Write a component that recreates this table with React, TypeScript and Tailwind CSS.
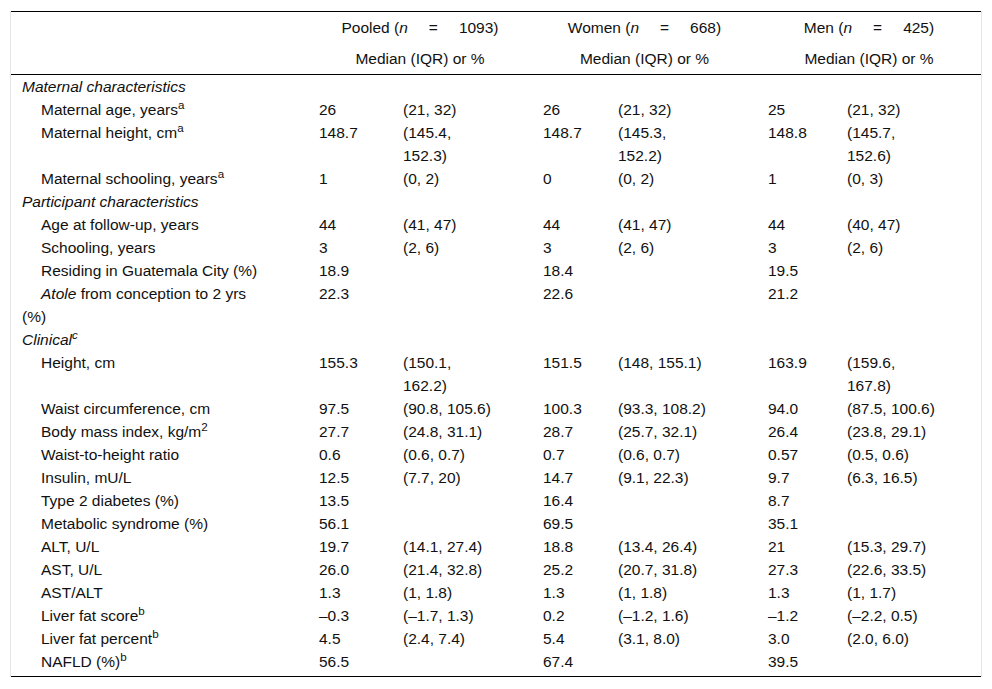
import React from "react";

type Row =
  | { kind: "cat"; label: React.ReactNode }
  | { kind: "row"; label: React.ReactNode; v: string[] };

const rows: Row[] = [
  { kind: "cat", label: "Maternal characteristics" },
  { kind: "row", label: <>Maternal age, years<sup>a</sup></>, v: ["26", "(21, 32)", "26", "(21, 32)", "25", "(21, 32)"] },
  { kind: "row", label: <>Maternal height, cm<sup>a</sup></>, v: ["148.7", "(145.4, 152.3)", "148.7", "(145.3, 152.2)", "148.8", "(145.7, 152.6)"] },
  { kind: "row", label: <>Maternal schooling, years<sup>a</sup></>, v: ["1", "(0, 2)", "0", "(0, 2)", "1", "(0, 3)"] },
  { kind: "cat", label: "Participant characteristics" },
  { kind: "row", label: "Age at follow-up, years", v: ["44", "(41, 47)", "44", "(41, 47)", "44", "(40, 47)"] },
  { kind: "row", label: "Schooling, years", v: ["3", "(2, 6)", "3", "(2, 6)", "3", "(2, 6)"] },
  { kind: "row", label: "Residing in Guatemala City (%)", v: ["18.9", "", "18.4", "", "19.5", ""] },
  { kind: "row", label: <><i>Atole</i> from conception to 2 yrs (%)</>, v: ["22.3", "", "22.6", "", "21.2", ""] },
  { kind: "cat", label: <>Clinical<sup>c</sup></> },
  { kind: "row", label: "Height, cm", v: ["155.3", "(150.1, 162.2)", "151.5", "(148, 155.1)", "163.9", "(159.6, 167.8)"] },
  { kind: "row", label: "Waist circumference, cm", v: ["97.5", "(90.8, 105.6)", "100.3", "(93.3, 108.2)", "94.0", "(87.5, 100.6)"] },
  { kind: "row", label: <>Body mass index, kg/m<sup>2</sup></>, v: ["27.7", "(24.8, 31.1)", "28.7", "(25.7, 32.1)", "26.4", "(23.8, 29.1)"] },
  { kind: "row", label: "Waist-to-height ratio", v: ["0.6", "(0.6, 0.7)", "0.7", "(0.6, 0.7)", "0.57", "(0.5, 0.6)"] },
  { kind: "row", label: "Insulin, mU/L", v: ["12.5", "(7.7, 20)", "14.7", "(9.1, 22.3)", "9.7", "(6.3, 16.5)"] },
  { kind: "row", label: "Type 2 diabetes (%)", v: ["13.5", "", "16.4", "", "8.7", ""] },
  { kind: "row", label: "Metabolic syndrome (%)", v: ["56.1", "", "69.5", "", "35.1", ""] },
  { kind: "row", label: "ALT, U/L", v: ["19.7", "(14.1, 27.4)", "18.8", "(13.4, 26.4)", "21", "(15.3, 29.7)"] },
  { kind: "row", label: "AST, U/L", v: ["26.0", "(21.4, 32.8)", "25.2", "(20.7, 31.8)", "27.3", "(22.6, 33.5)"] },
  { kind: "row", label: "AST/ALT", v: ["1.3", "(1, 1.8)", "1.3", "(1, 1.8)", "1.3", "(1, 1.7)"] },
  { kind: "row", label: <>Liver fat score<sup>b</sup></>, v: ["–0.3", "(–1.7, 1.3)", "0.2", "(–1.2, 1.6)", "–1.2", "(–2.2, 0.5)"] },
  { kind: "row", label: <>Liver fat percent<sup>b</sup></>, v: ["4.5", "(2.4, 7.4)", "5.4", "(3.1, 8.0)", "3.0", "(2.0, 6.0)"] },
  { kind: "row", label: <>NAFLD (%)<sup>b</sup></>, v: ["56.5", "", "67.4", "", "39.5", ""] },
];

const gridCols = "grid grid-cols-[297px_84px_140px_75px_150px_79px_145px]";

function Header({ name, n }: { name: string; n: string }) {
  return (
    <div className="col-span-2 py-[4px] text-center">
      {name} (<i>n</i>
      <span className="px-[21px]">=</span>
      {n})
    </div>
  );
}

export default function App() {
  return (
    <div className="min-h-[689px] bg-white pt-[11px]">
      <div
        className="ml-[10px] w-[972px] border-x border-[#e6e6e6] text-[15.5px] leading-[23px] text-[#111111]"
        style={{ fontFamily: '"Liberation Sans", Arial, sans-serif' }}
      >
        <div className="border-t border-b border-black pb-[3px]">
          <div className={gridCols}>
            <div />
            <Header name="Pooled" n="1093" />
            <Header name="Women" n="668" />
            <Header name="Men" n="425" />
          </div>
          <div className={`${gridCols} border-b border-black`}>
            <div />
            <div className="col-span-2 py-[4px] text-center">Median (IQR) or %</div>
            <div className="col-span-2 py-[4px] text-center">Median (IQR) or %</div>
            <div className="col-span-2 py-[4px] text-center">Median (IQR) or %</div>
          </div>
          {rows.map((r, i) =>
            r.kind === "cat" ? (
              <div key={i} className="pl-[11px] italic">
                {r.label}
              </div>
            ) : (
              <div key={i} className={gridCols}>
                <div className="pl-[11px] pr-[43px] indent-[19px]">{r.label}</div>
                {r.v.map((c, j) => (
                  <div key={j} className="pl-[11px]">
                    <div className={j % 2 === 1 ? "w-[92px]" : ""}>{c}</div>
                  </div>
                ))}
              </div>
            )
          )}
        </div>
      </div>
    </div>
  );
}
